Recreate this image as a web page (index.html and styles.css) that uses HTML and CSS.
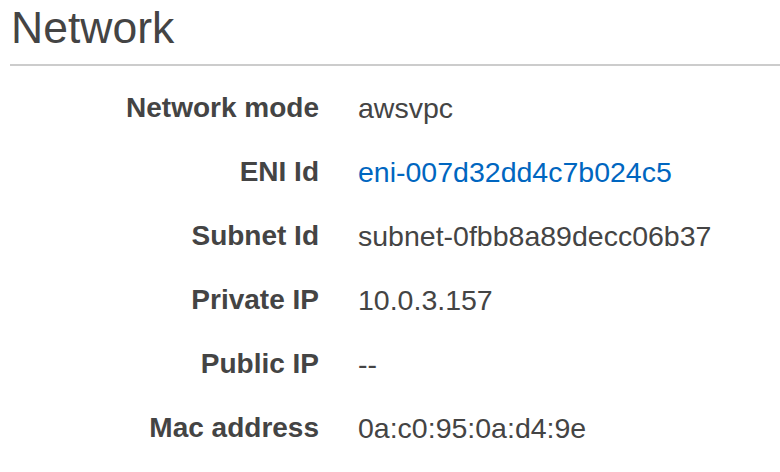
FILE: index.html
```html
<!DOCTYPE html>
<html>
<head>
<meta charset="utf-8">
<link rel="stylesheet" href="styles.css">
</head>
<body>
<div class="section">
  <h2 class="title">Network</h2>
  <dl class="details">
    <dt class="label">Network mode</dt><dd class="value">awsvpc</dd>
    <dt class="label">ENI Id</dt><dd class="value"><a class="link" href="#">eni-007d32dd4c7b024c5</a></dd>
    <dt class="label">Subnet Id</dt><dd class="value">subnet-0fbb8a89decc06b37</dd>
    <dt class="label">Private IP</dt><dd class="value">10.0.3.157</dd>
    <dt class="label">Public IP</dt><dd class="value">--</dd>
    <dt class="label">Mac address</dt><dd class="value">0a:c0:95:0a:d4:9e</dd>
  </dl>
</div>
</body>
</html>
```
FILE: styles.css
```css
html, body {
  margin: 0;
  padding: 0;
  background: #fff;
}
body {
  font-family: "Liberation Sans", Arial, sans-serif;
  color: #444;
}
.section {
  padding: 4px 0 0 10px;
}
.title {
  margin: 0;
  font-size: 44.5px;
  font-weight: normal;
  line-height: 48px;
  padding-left: 1px;
  padding-bottom: 12px;
  border-bottom: 2px solid #ccc;
}
.details {
  margin: 10px 0 0 0;
  display: grid;
  grid-template-columns: 309px 1fr;
  column-gap: 39px;
  font-size: 28.5px;
  line-height: 64px;
}
.label {
  font-size: 28px;
  font-weight: bold;
  text-align: right;
}
.value {
  margin: 0;
}
.link {
  color: #0066c0;
  text-decoration: none;
}
```
